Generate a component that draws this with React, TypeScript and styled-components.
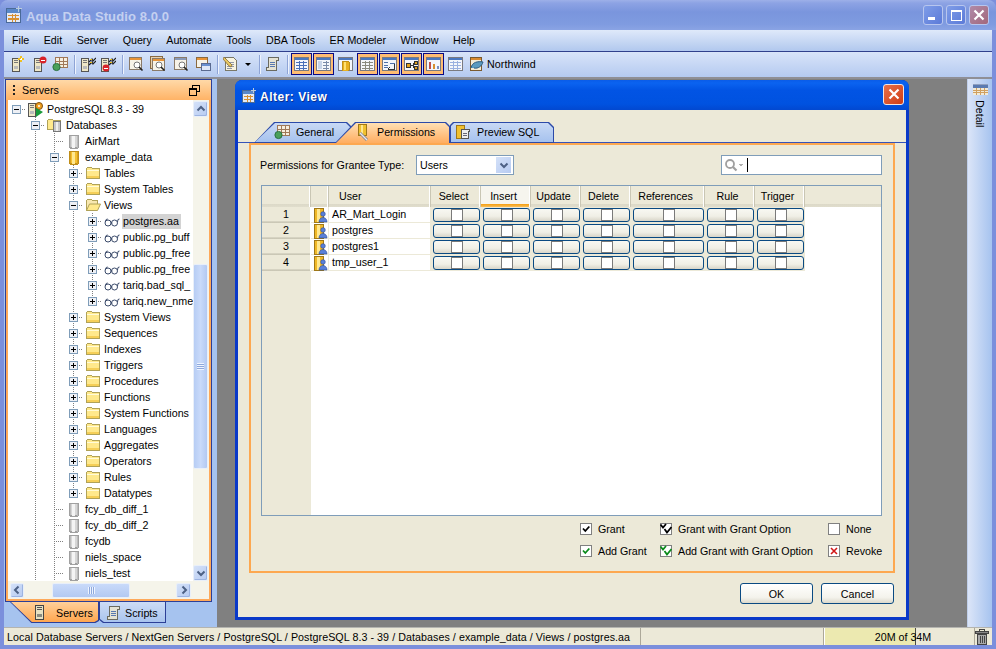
import React from 'react';
import styled, { createGlobalStyle } from 'styled-components';

const Global = createGlobalStyle`
  html, body { margin: 0; padding: 0; background: #7b8fdc; }
  * { box-sizing: border-box; }
  body { font: 10.7px "Liberation Sans", Arial, sans-serif; color: #000; }
`;

/* ---------- icons ---------- */
const Ico = styled.svg<{ $w?: number; $h?: number }>`
  width: ${p => p.$w ?? 16}px;
  height: ${p => p.$h ?? 16}px;
  flex: none;
  display: block;
`;
const I: React.FC<{ w?: number; h?: number; vb?: string; children: React.ReactNode }> = ({ w, h, vb = '0 0 16 16', children }) => (
  <Ico $w={w} $h={h} viewBox={vb} shapeRendering="crispEdges">{children}</Ico>
);

const Tower = ({ x = 3 }: { x?: number }) => (
  <g>
    <rect x={x + .5} y="2.5" width="7" height="13" fill="#efe7c6" stroke="#555" />
    <rect x={x + 2} y="4" width="4" height="1" fill="#777" />
    <rect x={x + 2} y="6" width="4" height="1" fill="#777" />
    <rect x={x + 2} y="10" width="4" height="3" fill="#bbb" />
  </g>
);
const ServerAdd = () => <I><Tower /><path d="M12 0v6M9 3h6" stroke="#f0c020" strokeWidth="1.6" /><path d="M12 2v2M11 3h2" stroke="#fff" /></I>;
const ServerDel = () => <I><Tower /><circle cx="12" cy="4" r="3.5" fill="#d8232a" shapeRendering="auto" /><rect x="10" y="3.5" width="4" height="1" fill="#fff" /></I>;
const GridGreen = () => (
  <I>
    <rect x="3.5" y="1.5" width="12" height="10" fill="#f6efe0" stroke="#a07858" />
    <path d="M3 5.5h12M3 8.5h12M7.5 2v9M11.5 2v9" stroke="#a07858" />
    <circle cx="4.5" cy="11" r="3.6" fill="#4aa05a" stroke="#2a7040" shapeRendering="auto" />
  </I>
);
const PlugServer = ({ del }: { del?: boolean }) => (
  <I>
    <Tower x={1} />
    <path d="M9 6l3-3 1 2 3-3M9 9l3-3 1 2 3-3" fill="none" stroke="#222" strokeWidth="1.2" shapeRendering="auto" />
    <path d="M10 4l2-1M10 7l2-1" stroke="#f0c020" />
    {del ? <><circle cx="6" cy="12" r="3.4" fill="#d8232a" shapeRendering="auto" /><rect x="4" y="11.5" width="4" height="1" fill="#fff" /></> : null}
  </I>
);
const SearchWin = ({ stack, tint = '#e89438' }: { stack?: boolean; tint?: string }) => (
  <I>
    {stack ? <rect x="0.5" y="0.5" width="12" height="12" fill="#e9d2b0" stroke="#8a6a40" /> : null}
    <rect x={stack ? 2.5 : 1.5} y={stack ? 2.5 : 1.5} width="12" height="12" fill="#f7f3e8" stroke="#8a7a68" />
    <rect x={stack ? 3 : 2} y={stack ? 3 : 2} width="11" height="2" fill={tint} />
    <circle cx="9" cy="9" r="3" fill="#fff" stroke="#777" shapeRendering="auto" />
    <path d="M11 11l3.5 3.5" stroke="#222" strokeWidth="1.6" shapeRendering="auto" />
  </I>
);
const TwoWin = () => (
  <I>
    <rect x="1.5" y="1.5" width="11" height="10" fill="#f7f3e8" stroke="#8a6a40" />
    <rect x="2" y="2" width="10" height="2" fill="#e89438" />
    <rect x="6.5" y="7.5" width="9" height="7" fill="#dfe8f8" stroke="#5a6a90" />
    <rect x="7" y="8" width="8" height="2" fill="#6a90d0" />
  </I>
);
const NotePencil = () => (
  <I>
    <path d="M2.5 1.5h8l3 3v10h-11z" fill="#f8f4e0" stroke="#7a7868" />
    <path d="M4 6h7M4 8h7M4 10h7M4 12h5" stroke="#9098a8" />
    <path d="M1 1l8 8-1 2-2-1-6-7z" fill="#e8c860" stroke="#7a6030" strokeWidth=".7" shapeRendering="auto" />
  </I>
);
const Scroll = () => (
  <I>
    <path d="M3.5 1.5h10v3h-2v10h-10v-3h2z" fill="#e4e2d4" stroke="#6a6a60" />
    <path d="M5 6h5M5 8h5M5 10h5" stroke="#5878b0" />
  </I>
);
const TableIco = ({ body = 'grid' }: { body?: 'grid' | 'split' | 'er' | 'bars' | 'cols' | 'plain' | 'tree' }) => (
  <I w={15} h={14} vb="0 0 15 14">
    <rect x="0.5" y="0.5" width="14" height="13" fill="#f4f6fb" stroke="#7a7a80" />
    <rect x="1" y="1" width="13" height="2" fill="#4a78c0" />
    {body === 'grid' && <path d="M2 5.5h11M2 8.5h11M2 11.5h11M5.5 4v9M9.5 4v9" stroke="#4a70b8" />}
    {body === 'split' && <><rect x="2" y="4" width="4" height="8" fill="#c8d4e8" /><path d="M7 5.5h6M7 8.5h6M7 11.5h6M10.5 4v9" stroke="#7a8aa8" /></>}
    {body === 'plain' && <path d="M2 5.5h11M2 8.5h11M2 11.5h11M5.5 4v9M9.5 4v9" stroke="#9ab0e0" />}
    {body === 'cols' && <path d="M2 5.5h11M2 8.5h11M2 11.5h11M5.5 4v9M9.5 4v9" stroke="#8a8a80" strokeWidth="1.4" />}
    {body === 'tree' && <><path d="M2 5.5h4M2 8h4M2 10.5h4M8 6h5" stroke="#5070a8" /><path d="M12 7v5h-4M8 10l-1.5 2 1.5 1" fill="none" stroke="#333" /></>}
    {body === 'er' && <><rect x="2.5" y="6.5" width="4" height="4" fill="#e0a020" stroke="#333" /><rect x="10.5" y="4.5" width="3" height="3" fill="#e0a020" stroke="#333" /><rect x="10.5" y="9.5" width="3" height="3" fill="#e0a020" stroke="#333" /><path d="M6 8.5h3M9 6v5" stroke="#333" /></>}
    {body === 'bars' && <><rect x="3" y="5" width="2" height="7" fill="#c0504a" /><rect x="7" y="7" width="2" height="5" fill="#d89030" /><rect x="11" y="9" width="2" height="3" fill="#7a90c0" /></>}
  </I>
);
const DetailIco = () => (
  <I w={15} h={11} vb="0 0 15 11">
    <rect x="0" y="0" width="15" height="1" fill="#90a0c0" />
    <rect x="0" y="1" width="15" height="3" fill="#5a7ab0" />
    <rect x="0" y="4" width="15" height="7" fill="#f0ead8" />
    <path d="M0 6.5h15M0 8.5h15M3.5 4v7M7.5 4v7M11.5 4v7" stroke="#d0a060" />
  </I>
);
const DbTable = () => (
  <I w={15} h={14} vb="0 0 15 14">
    <rect x="0.5" y="0.5" width="14" height="13" fill="#f4f6fb" stroke="#7a7a80" />
    <rect x="1" y="1" width="13" height="2" fill="#4a78c0" />
    <rect x="4" y="4" width="7" height="10" rx="1" fill="#e8b020" stroke="#c09018" />
    <rect x="6" y="5" width="2" height="8" fill="#ffe070" />
  </I>
);
const Cylinder = ({ yellow }: { yellow?: boolean }) => {
  const [e, m, h, s] = yellow ? ['#d8a020', '#f4c030', '#ffe890', '#c08e18'] : ['#bdbdbd', '#d6d6d6', '#f4f4f4', '#a0a0a0'];
  return (
    <I w={10} h={15} vb="0 0 10 15">
      <rect x="0.5" y="1.5" width="9" height="12" fill={m} stroke={s} />
      <rect x="1" y="1" width="8" height="1" fill={s} />
      <rect x="1" y="14" width="8" height="1" fill={s} />
      <rect x="1" y="2" width="1" height="11" fill={e} />
      <rect x="3" y="2" width="3" height="12" fill={h} />
      <rect x="8" y="2" width="1" height="12" fill={e} />
    </I>
  );
};
const Folder = () => (
  <I>
    <path d="M1.5 13.5v-10l1-1h4l1 1h7v10z" fill="#ffe98c" stroke="#b0a258" />
    <rect x="2" y="5" width="12" height="1" fill="#fffbd8" />
    <rect x="2" y="11" width="12" height="2" fill="#f5cf58" />
  </I>
);
const OpenFolder = () => (
  <I>
    <path d="M1.5 13.5v-10l1-1h4l1 1h5v3" fill="#f8e8b0" stroke="#b0a258" />
    <path d="M1.5 13.5l3-6.5h11l-3 6.5z" fill="#ffe98c" stroke="#b0a258" shapeRendering="auto" />
  </I>
);
const Glasses = () => (
  <I vb="0 0 16 16">
    <g fill="none" stroke="#3a4a6a" strokeWidth="1" shapeRendering="auto">
      <ellipse cx="4" cy="10" rx="3" ry="3" />
      <ellipse cx="10.5" cy="10" rx="3" ry="3" />
      <path d="M7 10q.7-1 1.4 0M13.5 9l.5-2.5 1.5-.5M1.2 9l1-2.5 1.5-.5" />
    </g>
  </I>
);
const RootServer = () => (
  <I>
    <Tower x={0} />
    <circle cx="11" cy="5" r="3.5" fill="#f0a020" stroke="#805010" shapeRendering="auto" />
    <circle cx="11" cy="5" r="1" fill="#fff" shapeRendering="auto" />
    <path d="M8 7l7 4-7 5z" fill="#1a9a3a" shapeRendering="auto" />
  </I>
);
const DbFolder = () => (
  <I>
    <path d="M0.5 12.5v-9l1-1h4l1 1h7v9z" fill="#ffe98c" stroke="#b0a258" />
    <rect x="6.5" y="4.5" width="7" height="10" rx="1" fill="#c8c8c8" stroke="#777" />
    <rect x="9" y="5" width="2" height="9" fill="#eee" />
  </I>
);
const Expander = ({ open }: { open?: boolean }) => (
  <I w={9} h={9} vb="0 0 9 9">
    <rect x=".5" y=".5" width="8" height="8" fill="#eef0f5" stroke="#7f9db9" />
    <rect x="2" y="4" width="5" height="1" fill="#000" />
    {open ? null : <rect x="4" y="2" width="1" height="5" fill="#000" />}
  </I>
);
const UserDb = () => (
  <I w={14} h={16} vb="0 0 14 16">
    <rect x=".5" y="1" width="9" height="14" fill="#f0b828" stroke="#a07818" />
    <rect x="3" y="1.5" width="3" height="13" fill="#ffe890" />
    <circle cx="9" cy="7" r="2.3" fill="#5a80d8" stroke="#2a4a98" strokeWidth=".6" shapeRendering="auto" />
    <path d="M5 15c0-6 8-6 8 0z" fill="#5a80d8" stroke="#2a4a98" strokeWidth=".6" shapeRendering="auto" />
  </I>
);
const Wrench = () => (
  <I w={12} h={18} vb="0 0 12 18">
    <rect x="1.5" y="1.5" width="8" height="11" rx="1" fill="#f0c030" stroke="#a07818" />
    <rect x="4" y="2" width="2" height="10" fill="#ffe890" />
    <path d="M3 10l7 7" stroke="#8a8a90" strokeWidth="3" shapeRendering="auto" />
    <path d="M3 10l7 7" stroke="#e8e8f0" strokeWidth="1.2" shapeRendering="auto" />
  </I>
);
const DbScroll = () => (
  <I>
    <rect x="1.5" y="1.5" width="8" height="13" fill="#f0c030" stroke="#a07818" />
    <path d="M6.5 5.5h8v2h-1v7h-7z" fill="#eee" stroke="#555" />
    <path d="M8 9h4M8 11h4" stroke="#667" />
  </I>
);
const SmallTower = () => (
  <I w={10} h={16} vb="0 0 10 16">
    <rect x=".5" y=".5" width="8" height="14" fill="#e7e1c2" stroke="#444" />
    <rect x="2" y="2" width="5" height="1" fill="#555" />
    <rect x="2" y="4" width="5" height="1" fill="#555" />
    <rect x="2" y="9" width="5" height="3" fill="#8a8a80" />
  </I>
);
const DialogGlyph = ({ s = 16 }: { s?: number }) => (
  <I w={s} h={s}>
    <rect x="1.5" y="2.5" width="12" height="12" fill="#e4eaf6" stroke="#4a6a98" />
    <rect x="2" y="3" width="11" height="3" fill="#5a88c8" />
    <path d="M3 8.5h9M3 11.5h9M6.5 7v7M9.5 7v7" stroke="#d89030" />
    <path d="M12 0v5M10 2.5h5" stroke="#bcd" />
  </I>
);
const Magnifier = () => (
  <I w={20} h={14} vb="0 0 20 14">
    <circle cx="6" cy="6" r="4" fill="none" stroke="#a0a0a0" strokeWidth="1.8" shapeRendering="auto" />
    <path d="M9 9l3.5 3.5" stroke="#a0a0a0" strokeWidth="2.2" shapeRendering="auto" />
    <path d="M14 6h5l-2.5 2.5z" fill="#b0b0b0" />
  </I>
);
const Trash = () => (
  <I w={14} h={16} vb="0 0 14 16">
    <rect x="4.5" y=".5" width="5" height="2" fill="none" stroke="#444" />
    <rect x=".5" y="2.5" width="13" height="2" fill="#888" stroke="#444" />
    <rect x="2.5" y="5.5" width="9" height="10" fill="#aaa" stroke="#444" />
    <path d="M5 7v7M7 7v7M9 7v7" stroke="#444" />
  </I>
);
const Check = ({ kind }: { kind: 'black' | 'green' | 'dblack' | 'dgreen' | 'none' | 'x' }) => (
  <I w={12} h={12} vb="0 0 12 12">
    <rect x=".5" y=".5" width="11" height="11" fill="#fff" stroke="#808080" />
    <g fill="none" stroke={kind.includes('green') ? '#0a8a1a' : '#000'} strokeWidth="1.8" shapeRendering="auto">
      {kind === 'black' || kind === 'green' ? <path d="M3 5.5l2.3 2.5 4-4.5" /> : null}
      {kind === 'dblack' || kind === 'dgreen' ? <path d="M.5 1.5l2.5 3 3-3.5M4.5 6l2.5 3.5 4.5-5.5" /> : null}
    </g>
    {kind === 'x' ? <path d="M3 3l6 6M9 3l-6 6" stroke="#d01818" strokeWidth="1.6" shapeRendering="auto" /> : null}
  </I>
);
const Chevron = ({ dir }: { dir: 'up' | 'down' | 'left' | 'right' }) => {
  const d = { up: 'M2.5 7.5l3.5-3.5 3.5 3.5', down: 'M2.5 4.5l3.5 3.5 3.5-3.5', left: 'M7.5 2.5l-3.5 3.5 3.5 3.5', right: 'M4.5 2.5l3.5 3.5-3.5 3.5' }[dir];
  return <Ico $w={12} $h={12} viewBox="0 0 12 12"><path d={d} fill="none" stroke="#4d6185" strokeWidth="2" /></Ico>;
};
const RestoreIco = () => (
  <I w={11} h={11} vb="0 0 11 11">
    <path d="M3.5 3V.5h7v6H8" fill="none" stroke="#000" />
    <rect x=".5" y="3.5" width="7" height="7" fill="none" stroke="#000" />
    <rect x="1" y="4" width="6" height="1" fill="#000" />
  </I>
);

/* ---------- window chrome ---------- */
const Win = styled.div`
  width: 996px;
  height: 649px;
  overflow: hidden;
  display: flex;
  flex-direction: column;
  padding: 0 4px 4px;
  background: #7b8fdc;
  border-radius: 8px 8px 0 0;
`;
const TitleBar = styled.div`
  height: 30px;
  margin: 0 -4px;
  padding: 0 7px 0 5px;
  display: flex;
  align-items: center;
  gap: 3px;
  background: linear-gradient(#9db0e8 0, #8da3e4 3px, #7a95dd 12px, #7f9be0 24px, #8aa4e4 30px);
`;
const TitleText = styled.span`
  flex: 1;
  padding-top: 2px;
  font: bold 13px "Liberation Sans", sans-serif;
  letter-spacing: 0.1px;
  color: #c4d0f0;
`;
const CapBtn = styled.div<{ $red?: boolean }>`
  width: 20px;
  height: 20px;
  border: 1px solid #b8c6ee;
  border-radius: 3px;
  background: ${p => (p.$red ? 'linear-gradient(135deg,#b08aa8,#a3687c)' : 'linear-gradient(135deg,#7f9de8,#5b7ad8)')};
  display: flex;
  align-items: center;
  justify-content: center;
`;
const MenuBar = styled.div`
  height: 22px;
  display: flex;
  align-items: center;
  padding: 0 0 2px 8px;
  gap: 14.5px;
  background: linear-gradient(#dfe9fa, #b1c8ee);
  border-bottom: 1px solid #30408c;
`;
const ToolBar = styled.div`
  height: 25px;
  display: flex;
  align-items: center;
  padding: 0 0 1px 3px;
  background: linear-gradient(#d8e4f9, #b5caf0);
`;
const Strip = styled.div`
  height: 2px;
  background: #8f8f96;
`;
const ToolGroup = styled.div<{ $gap?: number }>`
  display: flex;
  align-items: center;
  gap: ${p => p.$gap ?? 0}px;
`;
const ToolBtn = styled.div<{ $on?: boolean; $w?: number }>`
  width: ${p => p.$w ?? 20}px;
  height: 22px;
  flex: none;
  display: flex;
  align-items: center;
  justify-content: center;
  ${p => (p.$on ? 'background:#ffbd72;border:1px solid #0a0a84;' : '')}
`;
const Sep = styled.div`
  width: 1px;
  height: 19px;
  flex: none;
  margin: 0 3px 0 4px;
  background: #8ea4d6;
  box-shadow: 1px 0 0 #eef3fd;
`;
const Caret = styled.div`
  width: 14px;
  flex: none;
  display: flex;
  justify-content: center;
  &::before {
    content: '';
    border: 3px solid transparent;
    border-top: 3px solid #000;
    border-bottom: 0;
  }
`;
const DbName = styled.span`
  margin-left: 1px;
  letter-spacing: .08px;
`;

/* ---------- main ---------- */
const Main = styled.div`
  flex: 1;
  min-height: 0;
  display: flex;
`;
const SideArea = styled.div`
  width: 213px;
  flex: none;
  padding-left: 1px;
  background: #a6c3ef;
`;
const Panel = styled.div`
  width: 207px;
  height: 523px;
  display: flex;
  flex-direction: column;
  border: 1px solid #2c3f97;
  background: #fea95a;
  padding: 0 2px 2px;
`;
const PanelHead = styled.div`
  height: 20px;
  flex: none;
  display: flex;
  align-items: center;
  gap: 7px;
  background: linear-gradient(#ffd9a8, #ffb366);
  margin: 0 -2px;
  padding: 0 11px 0 7px;
`;
const Grip = styled.span`
  width: 2px;
  height: 11px;
  background: repeating-linear-gradient(#222 0 2px, transparent 2px 4px);
`;
const PanelTitle = styled.span`
  flex: 1;
`;
const PanelBody = styled.div`
  flex: 1;
  min-height: 0;
  background: #fff;
  display: flex;
  flex-direction: column;
`;
const TreeZone = styled.div`
  height: 481px;
  flex: none;
  display: flex;
`;
const Tree = styled.div`
  width: 185px;
  flex: none;
  overflow: hidden;
  padding-top: 1px;
`;
const Row = styled.div`
  height: 16px;
  margin-left: -1px;
  display: flex;
  align-items: center;
  white-space: nowrap;
`;
const vdots = 'repeating-linear-gradient(to bottom,#808080 0 1px,transparent 1px 2px)';
const hdots = 'repeating-linear-gradient(to right,#808080 0 1px,transparent 1px 2px)';
const Indent = styled.span<{ $line?: boolean }>`
  width: 19px;
  height: 16px;
  flex: none;
  ${p => (p.$line ? `background: ${vdots} 9px 0 / 1px 100% no-repeat;` : '')}
`;
const Toggle = styled.span<{ $v: 'full' | 'half' | 'none' }>`
  width: 19px;
  height: 16px;
  flex: none;
  display: flex;
  align-items: center;
  padding-left: 5px;
  background:
    ${hdots} 9px 8px / 10px 1px no-repeat
    ${p => (p.$v === 'none' ? '' : `, ${vdots} 9px 0 / 1px ${p.$v === 'full' ? '100%' : '50%'} no-repeat`)};
`;
const TreeIcon = styled.span`
  width: 16px;
  height: 16px;
  margin-left: 2px;
  flex: none;
  display: flex;
  align-items: center;
  justify-content: center;
`;
const RowLabel = styled.span<{ $sel?: boolean }>`
  margin-left: 2px;
  padding: 0 2px 0 1px;
  height: 15px;
  line-height: 15px;
  background: ${p => (p.$sel ? '#d3d3d3' : 'transparent')};
`;
const VScroll = styled.div`
  width: 16px;
  flex: none;
  display: flex;
  flex-direction: column;
  background: #f5f4ea;
  padding-top: 1px;
`;
const ScrollBtn = styled.div<{ $w?: number; $h?: number }>`
  width: ${p => p.$w ?? 15}px;
  height: ${p => p.$h ?? 16}px;
  flex: none;
  display: flex;
  align-items: center;
  justify-content: center;
  border: 1px solid #e9eff9;
  border-radius: 2px;
  background: linear-gradient(135deg, #d4e1f8, #b7cbf2);
  box-shadow: inset -1px -1px 0 #9db4e2;
`;
const VTrack = styled.div`
  flex: 1;
  padding-top: 147px;
`;
const VThumb = styled.div`
  width: 15px;
  height: 205px;
  display: flex;
  align-items: center;
  justify-content: center;
  border: 1px solid #e9eff9;
  border-radius: 2px;
  background: linear-gradient(to right, #b7cdf4, #c9dafa 50%, #b3c9f2);
`;
const VGrip = styled.span`
  width: 7px;
  height: 7px;
  background: repeating-linear-gradient(#eef4ff 0 1px, #8ea8dc 1px 2px);
`;
const HScroll = styled.div`
  flex: 1;
  display: flex;
  align-items: center;
  padding-left: 2px;
  background: #f5f4ea;
`;
const HThumb = styled.div`
  width: 78px;
  height: 15px;
  margin: 0 46px 0 28px;
  display: flex;
  align-items: center;
  justify-content: center;
  border: 1px solid #e9eff9;
  border-radius: 2px;
  background: linear-gradient(#c9dafa, #b3c9f2);
`;
const HGrip = styled.span`
  width: 7px;
  height: 7px;
  background: repeating-linear-gradient(to right, #eef4ff 0 1px, #8ea8dc 1px 2px);
`;
const SideTabs = styled.div`
  height: 21px;
  padding-left: 5px;
  display: flex;
`;
const SideTab = styled.div<{ $on?: boolean; $w: number; $pad: number }>`
  position: relative;
  isolation: isolate;
  width: ${p => p.$w}px;
  height: 21px;
  display: flex;
  align-items: center;
  gap: ${p => (p.$on ? 11 : 3)}px;
  padding-left: ${p => p.$pad}px;
  background: #2c3f97;
  clip-path: ${p => (p.$on ? 'polygon(0 0,100% 0,100% 90%,96% 100%,24% 100%)' : 'polygon(0 0,100% 0,100% 100%,6% 100%,0 85%)')};
  &::before {
    content: '';
    position: absolute;
    inset: 0 1px 1px 1px;
    z-index: -1;
    background: ${p => (p.$on ? 'linear-gradient(#ffd09a,#ffa64f)' : 'linear-gradient(#cddcf6,#a9c4ee)')};
    clip-path: inherit;
  }
`;
const Desktop = styled.div`
  position: relative;
  width: 750px;
  flex: none;
  background: #808080;
`;
const DetailRail = styled.div`
  width: 25px;
  flex: none;
  display: flex;
  flex-direction: column;
  align-items: center;
  padding-top: 5px;
  gap: 5px;
  background: linear-gradient(to right, #dbe5f8, #a6c3ef);
  border-left: 1px solid #c0cfea;
`;
const DetailText = styled.span`
  writing-mode: vertical-rl;
`;

/* ---------- dialog ---------- */
const Dialog = styled.div`
  position: absolute;
  left: 18px;
  top: 1px;
  width: 674px;
  height: 540px;
  display: flex;
  flex-direction: column;
  background: #0d3fce;
  border: 3px solid #0a39c8;
  border-top: 0;
  border-radius: 7px 7px 0 0;
  box-shadow: inset 1px 0 0 #2a6cf0, inset -1px 0 0 #0030b0;
`;
const DlgTitle = styled.div`
  height: 30px;
  flex: none;
  margin: 0 -3px;
  padding: 2px 5px 0 6px;
  display: flex;
  align-items: center;
  gap: 3px;
  border-radius: 7px 7px 0 0;
  background: linear-gradient(#0a5ce8 0, #0b63f0 3px, #0254e4 10px, #0052e0 24px, #0248d0 30px);
`;
const DlgTitleText = styled.span`
  flex: 1;
  padding-top: 1px;
  font: bold 12px "Liberation Sans", sans-serif;
  letter-spacing: 0.5px;
  color: #fff;
  text-shadow: 1px 1px 0 #0a2f90;
`;
const DlgClose = styled.div`
  width: 21px;
  height: 21px;
  margin: -4px 0 0;
  border: 1px solid #f4e4e0;
  border-radius: 3px;
  background: linear-gradient(135deg, #e8704a, #d03c14);
  display: flex;
  align-items: center;
  justify-content: center;
`;
const DlgBody = styled.div`
  flex: 1;
  min-height: 0;
  background: #ece9d8;
  display: flex;
  flex-direction: column;
  padding-top: 12px;
`;
const TabRow = styled.div`
  height: 21px;
  flex: none;
  padding-left: 16px;
  display: flex;
  border-bottom: 1px solid #3553b8;
`;
const Tab = styled.div<{ $on?: boolean; $slant?: boolean; $w: number; $pad: number; $pull?: number; $gap?: number }>`
  position: relative;
  isolation: isolate;
  z-index: ${p => (p.$on ? 2 : 1)};
  width: ${p => p.$w}px;
  height: 21px;
  margin-left: ${p => p.$pull ?? 0}px;
  padding: 0 0 2px ${p => p.$pad}px;
  display: flex;
  align-items: center;
  gap: ${p => p.$gap ?? 6}px;
  background: #2c4aa8;
  clip-path: ${p =>
    p.$slant
      ? 'polygon(0 100%,20px 0,calc(100% - 4px) 0,100% 4px,100% 100%)'
      : 'polygon(0 3px,3px 0,calc(100% - 5px) 0,100% 5px,100% 100%,0 100%)'};
  &::before {
    content: '';
    position: absolute;
    inset: 1px 1px ${p => (p.$on ? 0 : 1)}px 1px;
    z-index: -1;
    background: ${p => (p.$on ? 'linear-gradient(#ffe0b4,#ffad60)' : 'linear-gradient(#c8d9f5,#a6c2ee)')};
    clip-path: inherit;
  }
`;
const Frame = styled.div`
  width: 646px;
  height: 430px;
  margin-left: 11px;
  flex: none;
  border: 2px solid #fda850;
  padding: 10px 11px 0 10px;
  display: flex;
  flex-direction: column;
`;
const GranteeRow = styled.div`
  height: 20px;
  flex: none;
  display: flex;
  align-items: center;
`;
const GranteeLabel = styled.span`
  width: 156px;
  margin-left: -1px;
  flex: none;
`;
const Combo = styled.div`
  width: 98px;
  height: 20px;
  padding: 0 2px 0 3px;
  display: flex;
  align-items: center;
  justify-content: space-between;
  background: #fff;
  border: 1px solid #7f9db9;
`;
const ComboBtn = styled.span`
  width: 15px;
  height: 16px;
  display: flex;
  align-items: center;
  justify-content: center;
  background: linear-gradient(135deg, #d4e1f8, #b7cbf2);
`;
const Search = styled.div`
  width: 161px;
  height: 20px;
  margin-left: auto;
  padding-left: 2px;
  display: flex;
  align-items: center;
  background: #fff;
  border: 1px solid #7f9db9;
`;
const Cursor = styled.span`
  width: 1px;
  height: 14px;
  margin-left: 3px;
  background: #000;
`;
const Table = styled.div`
  width: 621px;
  height: 331px;
  margin-top: 10px;
  flex: none;
  border: 1px solid #7f9db9;
  background: linear-gradient(to right, #ece9d8 49px, #fff 49px);
  display: grid;
  grid-template-columns: 49px 18px 102px 50px 50px 50px 50px 74px 50px 50px 1fr;
  grid-auto-rows: 16px;
  grid-template-rows: 21px;
  align-content: start;
`;
const Head = styled.div<{ $hot?: boolean; $sep?: boolean; $left?: boolean }>`
  display: flex;
  align-items: center;
  justify-content: ${p => (p.$left ? 'flex-start' : 'center')};
  padding: 0 ${p => (p.$left ? 0 : 4)}px 2px ${p => (p.$left ? 10 : 0)}px;
  background:
    linear-gradient(${p => (p.$hot ? '#f59e12,#f8c05a' : '#dcd9c8,#e0ddcc')}) bottom / 100% 3px no-repeat,
    ${p => (p.$hot ? '#f6f5ee' : '#ece9d8')};
  border-right: ${p => (p.$sep === false ? '0' : '1px solid #c9c6b4')};
  box-shadow: ${p => (p.$sep === false ? 'none' : 'inset -1px 0 0 #fff')};
`;
const RowNo = styled.div`
  display: flex;
  align-items: center;
  justify-content: center;
  padding-bottom: 3px;
  background: linear-gradient(#dcd9c8, #c5c2b0) bottom / 100% 2px no-repeat, #ece9d8;
  border-right: 1px solid #fff;
`;
const IconCell = styled.div`
  display: flex;
  align-items: center;
  padding-left: 3px;
  border-right: 1px solid #ece9d8;
  border-bottom: 1px solid #ece9d8;
`;
const NameCell = styled.div`
  display: flex;
  align-items: center;
  padding: 0 0 1px 3px;
  border-bottom: 1px solid #ece9d8;
  border-right: 1px solid #ece9d8;
`;
const SwitchCell = styled.div`
  padding: 1px 1px 1px 2px;
  background: #ece9d8;
`;
const RowEnd = styled.div``;
const Switch = styled.div`
  height: 14px;
  display: flex;
  align-items: center;
  justify-content: center;
  background: linear-gradient(#f8f8f2, #f0efe6 60%, #d8d5c8);
  border: 1px solid #0a4a82;
  border-radius: 3px;
`;
const SwitchBox = styled.span`
  width: 12px;
  height: 12px;
  background: #fff;
  border: 1px solid #7a7a7a;
`;
const Legend = styled.div`
  margin-top: 5px;
  display: grid;
  grid-template-columns: 80px 168px 54px;
  grid-auto-rows: 16px;
  row-gap: 6px;
  justify-content: end;
`;
const LegendItem = styled.div`
  display: flex;
  align-items: center;
  gap: 6px;
  white-space: nowrap;
`;
const DlgFoot = styled.div`
  margin-top: 10px;
  padding-right: 12px;
  display: flex;
  justify-content: flex-end;
  gap: 8px;
`;
const Btn = styled.div`
  width: 73px;
  height: 21px;
  display: flex;
  align-items: center;
  justify-content: center;
  background: linear-gradient(#fff, #f4f3ec 70%, #dcd9cc);
  border: 1px solid #0a4a82;
  border-radius: 3px;
`;

/* ---------- status ---------- */
const Status = styled.div`
  height: 18px;
  flex: none;
  display: flex;
  align-items: center;
  background: #ece9d8;
  border-top: 1px solid #b4b4b0;
`;
const Crumb = styled.div`
  width: 637px;
  flex: none;
  height: 100%;
  display: flex;
  align-items: center;
  padding-left: 3px;
  white-space: nowrap;
  letter-spacing: .06px;
  border-right: 1px solid #aca899;
`;
const Blank = styled.div`
  width: 183px;
  flex: none;
  height: 100%;
  border-right: 1px solid #aca899;
  box-shadow: 1px 0 0 #fff;
`;
const Memory = styled.div`
  width: 143px;
  margin-left: 1px;
  height: 100%;
  flex: none;
  display: flex;
  align-items: center;
  justify-content: center;
  background: linear-gradient(to right, #ece9b0 90px, #4c4c44 90px, #4c4c44 91px, transparent 91px);
  padding-left: 13px;
`;
const Sink = styled.div`
  flex: 1;
  height: 100%;
  display: flex;
  align-items: center;
  justify-content: flex-end;
  padding-right: 3px;
  border-left: 1px solid #aca899;
  margin-left: 6px;
`;

/* ---------- data ---------- */
type Node = { t: string; l: number; kind: 'root' | 'dbs' | 'gray' | 'yellow' | 'folder' | 'open' | 'view'; exp?: 'open' | 'closed'; v?: 'full' | 'half' | 'none'; sel?: boolean };
const f = (t: string, v: 'full' | 'half' = 'full'): Node => ({ t, l: 3, kind: 'folder', exp: 'closed', v });
const vw = (t: string, v: 'full' | 'half' = 'full', sel?: boolean): Node => ({ t, l: 4, kind: 'view', exp: 'closed', v, sel });
const db = (t: string): Node => ({ t, l: 2, kind: 'gray', v: 'full' });
const nodes: Node[] = [
  { t: 'PostgreSQL 8.3 - 39', l: 0, kind: 'root', exp: 'open', v: 'none' },
  { t: 'Databases', l: 1, kind: 'dbs', exp: 'open', v: 'full' },
  db('AirMart'),
  { t: 'example_data', l: 2, kind: 'yellow', exp: 'open', v: 'full' },
  f('Tables'), f('System Tables'),
  { t: 'Views', l: 3, kind: 'open', exp: 'open', v: 'full' },
  vw('postgres.aa', 'full', true), vw('public.pg_buff'), vw('public.pg_free'), vw('public.pg_free'), vw('tariq.bad_sql_'), vw('tariq.new_nme', 'half'),
  f('System Views'), f('Sequences'), f('Indexes'), f('Triggers'), f('Procedures'), f('Functions'), f('System Functions'), f('Languages'), f('Aggregates'), f('Operators'), f('Rules'), f('Datatypes', 'half'),
  db('fcy_db_diff_1'), db('fcy_db_diff_2'), db('fcydb'), db('niels_space'), db('niels_test'),
];
const nodeIcon = (k: Node['kind']) => {
  switch (k) {
    case 'root': return <RootServer />;
    case 'dbs': return <DbFolder />;
    case 'gray': return <Cylinder />;
    case 'yellow': return <Cylinder yellow />;
    case 'folder': return <Folder />;
    case 'open': return <OpenFolder />;
    default: return <Glasses />;
  }
};
const columns = ['Select', 'Insert', 'Update', 'Delete', 'References', 'Rule', 'Trigger'];
const users = ['AR_Mart_Login', 'postgres', 'postgres1', 'tmp_user_1'];
const menus = ['File', 'Edit', 'Server', 'Query', 'Automate', 'Tools', 'DBA Tools', 'ER Modeler', 'Window', 'Help'];
const legend: [React.ComponentProps<typeof Check>['kind'], string][] = [
  ['black', 'Grant'], ['dblack', 'Grant with Grant Option'], ['none', 'None'],
  ['green', 'Add Grant'], ['dgreen', 'Add Grant with Grant Option'], ['x', 'Revoke'],
];

const CloseX = ({ size = 12 }: { size?: number }) => (
  <Ico $w={size} $h={size} viewBox="0 0 12 12"><path d="M1.5 1.5l9 9M10.5 1.5l-9 9" stroke="#fff" strokeWidth="2.2" /></Ico>
);

export default function App() {
  return (
    <Win>
      <Global />
      <TitleBar>
        <DialogGlyph s={18} />
        <TitleText>Aqua Data Studio 8.0.0</TitleText>
        <CapBtn><Ico $w={12} $h={12} viewBox="0 0 12 12"><rect x="1" y="8" width="7" height="3" fill="#fff" /></Ico></CapBtn>
        <CapBtn><Ico $w={12} $h={12} viewBox="0 0 12 12" shapeRendering="crispEdges"><rect x="1" y="1" width="10" height="10" fill="none" stroke="#fff" /><rect x="1" y="1" width="10" height="2" fill="#fff" /></Ico></CapBtn>
        <CapBtn $red><CloseX /></CapBtn>
      </TitleBar>
      <MenuBar>{menus.map(m => <span key={m}>{m}</span>)}</MenuBar>
      <ToolBar>
        <ToolGroup $gap={1.5}>
          <ToolBtn><ServerAdd /></ToolBtn><ToolBtn><ServerDel /></ToolBtn><ToolBtn><GridGreen /></ToolBtn>
        </ToolGroup>
        <Sep />
        <ToolGroup>
          <ToolBtn><PlugServer /></ToolBtn><ToolBtn><PlugServer del /></ToolBtn>
        </ToolGroup>
        <Sep />
        <ToolGroup $gap={2.33}>
          <ToolBtn><SearchWin /></ToolBtn><ToolBtn><SearchWin stack /></ToolBtn><ToolBtn><SearchWin tint="#8a9ab8" /></ToolBtn><ToolBtn><TwoWin /></ToolBtn>
        </ToolGroup>
        <Sep />
        <ToolBtn><NotePencil /></ToolBtn>
        <Caret />
        <Sep />
        <ToolBtn><Scroll /></ToolBtn>
        <Sep />
        <ToolGroup $gap={1}>
          <ToolBtn $on $w={21}><TableIco body="grid" /></ToolBtn>
          <ToolBtn $on $w={21}><TableIco body="split" /></ToolBtn>
          <ToolBtn $w={21}><DbTable /></ToolBtn>
          <ToolBtn $on $w={21}><TableIco body="cols" /></ToolBtn>
          <ToolBtn $on $w={21}><TableIco body="tree" /></ToolBtn>
          <ToolBtn $on $w={21}><TableIco body="er" /></ToolBtn>
          <ToolBtn $on $w={21}><TableIco body="bars" /></ToolBtn>
          <ToolBtn $w={21}><TableIco body="plain" /></ToolBtn>
        </ToolGroup>
        <ToolBtn><I vb="0 0 16 16"><rect x="2.5" y="1.5" width="11" height="13" fill="#f4ecd8" stroke="#7a5a30" /><rect x="3" y="2" width="10" height="2" fill="#d88a30" /><path d="M3 12c1-6 7-7 12-6-1 4-5 7-9 6" fill="#5a9ac0" stroke="#2a5a80" shapeRendering="auto" /></I></ToolBtn>
        <DbName>Northwind</DbName>
      </ToolBar>
      <Strip />
      <Main>
        <SideArea>
          <Panel>
            <PanelHead><Grip /><PanelTitle>Servers</PanelTitle><RestoreIco /></PanelHead>
            <PanelBody>
              <TreeZone>
                <Tree>
                  {nodes.map((n, idx) => (
                    <Row key={idx}>
                      {Array.from({ length: n.l }, (_, i) => <Indent key={i} $line={i > 0} />)}
                      <Toggle $v={n.v ?? 'none'}>{n.exp ? <Expander open={n.exp === 'open'} /> : null}</Toggle>
                      <TreeIcon>{nodeIcon(n.kind)}</TreeIcon>
                      <RowLabel $sel={n.sel}>{n.t}</RowLabel>
                    </Row>
                  ))}
                </Tree>
                <VScroll>
                  <ScrollBtn><Chevron dir="up" /></ScrollBtn>
                  <VTrack><VThumb><VGrip /></VThumb></VTrack>
                  <ScrollBtn><Chevron dir="down" /></ScrollBtn>
                </VScroll>
              </TreeZone>
              <HScroll>
                <ScrollBtn $h={15} $w={14}><Chevron dir="left" /></ScrollBtn>
                <HThumb><HGrip /></HThumb>
                <ScrollBtn $h={15} $w={15}><Chevron dir="right" /></ScrollBtn>
              </HScroll>
            </PanelBody>
          </Panel>
          <SideTabs>
            <SideTab $on $w={89} $pad={25}><SmallTower />Servers</SideTab>
            <SideTab $w={67} $pad={7}><Scroll />Scripts</SideTab>
          </SideTabs>
        </SideArea>
        <Desktop>
          <Dialog>
            <DlgTitle>
              <DialogGlyph />
              <DlgTitleText>Alter: View</DlgTitleText>
              <DlgClose><CloseX /></DlgClose>
            </DlgTitle>
            <DlgBody>
              <TabRow>
                <Tab $slant $w={97} $pad={20}><GridGreen />General</Tab>
                <Tab $on $slant $gap={8} $w={115} $pad={22} $pull={-16}><Wrench />Permissions</Tab>
                <Tab $w={104} $pad={5}><DbScroll />Preview SQL</Tab>
              </TabRow>
              <Frame>
                <GranteeRow>
                  <GranteeLabel>Permissions for Grantee Type:</GranteeLabel>
                  <Combo>Users<ComboBtn><Chevron dir="down" /></ComboBtn></Combo>
                  <Search><Magnifier /><Cursor /></Search>
                </GranteeRow>
                <Table>
                  <Head /><Head /><Head $left>User</Head>
                  {columns.map(c => <Head key={c} $hot={c === 'Insert'}>{c}</Head>)}
                  <Head $sep={false} />
                  {users.map((u, i) => (
                    <React.Fragment key={u}>
                      <RowNo>{i + 1}</RowNo>
                      <IconCell><UserDb /></IconCell>
                      <NameCell>{u}</NameCell>
                      {columns.map(c => <SwitchCell key={c}><Switch><SwitchBox /></Switch></SwitchCell>)}
                      <RowEnd />
                    </React.Fragment>
                  ))}
                </Table>
                <Legend>
                  {legend.map(([k, t]) => <LegendItem key={t}><Check kind={k} />{t}</LegendItem>)}
                </Legend>
              </Frame>
              <DlgFoot><Btn>OK</Btn><Btn>Cancel</Btn></DlgFoot>
            </DlgBody>
          </Dialog>
        </Desktop>
        <DetailRail>
          <DetailIco />
          <DetailText>Detail</DetailText>
        </DetailRail>
      </Main>
      <Status>
        <Crumb>Local Database Servers / NextGen Servers / PostgreSQL / PostgreSQL 8.3 - 39 / Databases / example_data / Views / postgres.aa</Crumb>
        <Blank />
        <Memory>20M of 34M</Memory>
        <Sink><Trash /></Sink>
      </Status>
    </Win>
  );
}
